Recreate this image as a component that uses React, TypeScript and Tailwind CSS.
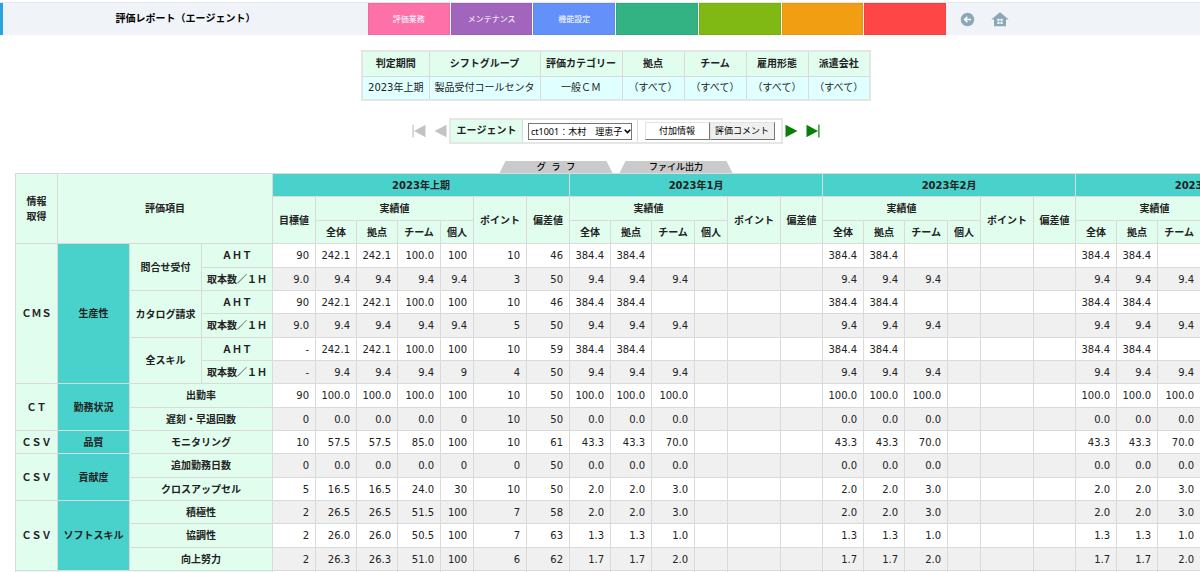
import React, { useState } from "react";

type Row = {
  group?: { code: string; name: string; span: number };
  skill?: { name: string; span: number };
  item: string;
  half: string[];
  month: string[];
};

const menus = [
  { label: "評価業務", color: "bg-[#fd70a8]" },
  { label: "メンテナンス", color: "bg-[#a265bd]" },
  { label: "機能設定", color: "bg-[#6490fa]" },
  { label: "", color: "bg-[#33b383]" },
  { label: "", color: "bg-[#80b814]" },
  { label: "", color: "bg-[#f19e12]" },
  { label: "", color: "bg-[#ff4646]" },
];

const conditions = [
  { label: "判定期間", value: "2023年上期", width: "w-[67px]" },
  { label: "シフトグループ", value: "製品受付コールセンタ", width: "w-[111px]" },
  { label: "評価カテゴリー", value: "一般ＣＭ", width: "w-[82px]" },
  { label: "拠点", value: "（すべて）", width: "w-[62px]" },
  { label: "チーム", value: "（すべて）", width: "w-[62px]" },
  { label: "雇用形態", value: "（すべて）", width: "w-[62px]" },
  { label: "派遣会社", value: "（すべて）", width: "w-[62px]" },
];

const months = ["2023年1月", "2023年2月", "2023年3月"];

const AHT_MONTH = ["384.4", "384.4", "", "", "", ""];
const CALL_MONTH = ["9.4", "9.4", "9.4", "", "", ""];

// half: 目標値, 全体, 拠点, チーム, 個人, ポイント, 偏差値
const rows: Row[] = [
  {
    group: { code: "ＣＭＳ", name: "生産性", span: 6 },
    skill: { name: "問合せ受付", span: 2 },
    item: "ＡＨＴ",
    half: ["90", "242.1", "242.1", "100.0", "100", "10", "46"],
    month: AHT_MONTH,
  },
  { item: "取本数／１Ｈ", half: ["9.0", "9.4", "9.4", "9.4", "9.4", "3", "50"], month: CALL_MONTH },
  {
    skill: { name: "カタログ請求", span: 2 },
    item: "ＡＨＴ",
    half: ["90", "242.1", "242.1", "100.0", "100", "10", "46"],
    month: AHT_MONTH,
  },
  { item: "取本数／１Ｈ", half: ["9.0", "9.4", "9.4", "9.4", "9.4", "5", "50"], month: CALL_MONTH },
  {
    skill: { name: "全スキル", span: 2 },
    item: "ＡＨＴ",
    half: ["-", "242.1", "242.1", "100.0", "100", "10", "59"],
    month: AHT_MONTH,
  },
  { item: "取本数／１Ｈ", half: ["-", "9.4", "9.4", "9.4", "9", "4", "50"], month: CALL_MONTH },
  {
    group: { code: "ＣＴ", name: "勤務状況", span: 2 },
    item: "出勤率",
    half: ["90", "100.0", "100.0", "100.0", "100", "10", "50"],
    month: ["100.0", "100.0", "100.0", "", "", ""],
  },
  {
    item: "遅刻・早退回数",
    half: ["0", "0.0", "0.0", "0.0", "0", "10", "50"],
    month: ["0.0", "0.0", "0.0", "", "", ""],
  },
  {
    group: { code: "ＣＳＶ", name: "品質", span: 1 },
    item: "モニタリング",
    half: ["10", "57.5", "57.5", "85.0", "100", "10", "61"],
    month: ["43.3", "43.3", "70.0", "", "", ""],
  },
  {
    group: { code: "ＣＳＶ", name: "貢献度", span: 2 },
    item: "追加勤務日数",
    half: ["0", "0.0", "0.0", "0.0", "0", "0", "50"],
    month: ["0.0", "0.0", "0.0", "", "", ""],
  },
  {
    item: "クロスアップセル",
    half: ["5", "16.5", "16.5", "24.0", "30", "10", "50"],
    month: ["2.0", "2.0", "3.0", "", "", ""],
  },
  {
    group: { code: "ＣＳＶ", name: "ソフトスキル", span: 3 },
    item: "積極性",
    half: ["2", "26.5", "26.5", "51.5", "100", "7", "58"],
    month: ["2.0", "2.0", "3.0", "", "", ""],
  },
  {
    item: "協調性",
    half: ["2", "26.0", "26.0", "50.5", "100", "7", "63"],
    month: ["1.3", "1.3", "1.0", "", "", ""],
  },
  {
    item: "向上努力",
    half: ["2", "26.3", "26.3", "51.0", "100", "6", "62"],
    month: ["1.7", "1.7", "2.0", "", "", ""],
  },
];

const line = "border border-[#dadada]";
const head = `${line} bg-[#e1fdee] font-bold text-center`;
const teal = `${line} bg-[#49d1cc] font-bold text-center`;

const Header = () => (
  <header className="mt-[2px] flex h-[33px] shrink-0 items-stretch border-t border-[#e6eaee] bg-[#f0f4f8]">
    <div className="flex w-[368px] items-center justify-center border-l-3 border-[#2ba3e0]">
      <h1 className="font-bold text-black">評価レポート（エージェント）</h1>
    </div>
    <nav className="grid w-[578px] grid-cols-7 gap-px bg-white/70" aria-label="メニュー">
      {menus.map((menu, i) => (
        <button key={i} type="button" className={`${menu.color} border border-black/5 pt-0.5 text-[8px] text-white`}>
          {menu.label}
        </button>
      ))}
    </nav>
    <div className="ml-3.5 flex items-center gap-4">
      <a href="#back" aria-label="戻る">
        <svg width="15" height="15" viewBox="0 0 15 15">
          <circle cx="7.5" cy="7.5" r="6.8" fill="#8ba8b6" />
          <path d="M11 7.5H4.6M7.4 4.7L4.5 7.5l2.9 2.8" fill="none" stroke="#fff" strokeWidth="1.4" />
        </svg>
      </a>
      <a href="#home" aria-label="ホーム">
        <svg width="18" height="15" viewBox="0 0 18 15">
          <path d="M9 0.3L17.7 7.6H15V14.2H3V7.6H0.3z" fill="#8ba8b6" />
          <path
            d="M6.3 6.8h2.3v2.3H6.3zM9.4 6.8h2.3v2.3H9.4zM6.3 9.8h2.3v2.3H6.3zM9.4 9.8h2.3v2.3H9.4z"
            fill="#f0f4f8"
          />
        </svg>
      </a>
    </div>
  </header>
);

const Conditions = () => (
  <table className="mt-[15px] table-fixed border-collapse border-2 border-[#e2e6e4] text-center">
    <thead>
      <tr className="h-[25px]">
        {conditions.map((c) => (
          <th key={c.label} className={`${head} ${c.width} whitespace-nowrap`}>
            {c.label}
          </th>
        ))}
      </tr>
    </thead>
    <tbody>
      <tr className="h-6">
        {conditions.map((c) => (
          <td key={c.label} className={`${line} bg-[#e0ffff] whitespace-nowrap`}>
            {c.value}
          </td>
        ))}
      </tr>
    </tbody>
  </table>
);

const AgentBar = () => {
  const [agent, setAgent] = useState("ct1001");

  return (
    <div className="mt-[17px] flex items-center">
      <button type="button" aria-label="最初" className="mr-2 text-[#c3c3c3]">
        <svg width="14" height="14" viewBox="0 0 14 14" fill="currentColor">
          <path d="M0.5 0.5h1.2v13H0.5zM13.5 0.8v12.4L2 7z" />
        </svg>
      </button>
      <button type="button" aria-label="前へ" className="mr-[2px] text-[#c3c3c3]">
        <svg width="13" height="14" viewBox="0 0 13 14" fill="currentColor">
          <path d="M12.5 0.8v12.4L0.5 7z" />
        </svg>
      </button>
      <div className="flex h-[26px] items-stretch border-2 border-[#e6e6e6]">
        <label htmlFor="agent" className="flex w-[71px] items-center justify-center bg-[#e1fdee] font-bold">
          エージェント
        </label>
        <div className="flex w-[116px] items-center justify-center border-x border-[#dadada]">
          <div className="relative flex">
            <select
              id="agent"
              value={agent}
              onChange={(e) => setAgent(e.target.value)}
              className="h-[17px] w-[104px] appearance-none border border-[#767676] bg-white pl-[2px] font-['Noto_Sans','Noto_Sans_CJK_JP',sans-serif] text-[9px] leading-[15px] text-black"
            >
              <option value="ct1001">ct1001：木村　理恵子</option>
            </select>
            <svg
              className="pointer-events-none absolute top-[6px] right-px"
              width="7"
              height="5"
              viewBox="0 0 7 5"
              fill="none"
              stroke="#000"
              strokeWidth="1.5"
            >
              <path d="M0.7 0.8l2.8 2.8 2.8-2.8" />
            </svg>
          </div>
        </div>
        <div className="flex w-[143px] items-center justify-center">
          <button
            type="button"
            className="h-[18px] w-[65px] border border-[#e3e3e3] border-r-[#767676] border-b-[#767676] bg-white text-[9px] text-black"
          >
            付加情報
          </button>
          <button
            type="button"
            className="h-[18px] w-[65px] border border-[#e3e3e3] border-r-[#767676] border-b-[#767676] bg-[#efefef] text-[9px] text-black"
          >
            評価コメント
          </button>
        </div>
      </div>
      <button type="button" aria-label="次へ" className="ml-[2px] text-[#088008]">
        <svg width="13" height="14" viewBox="0 0 13 14" fill="currentColor">
          <path d="M0.5 0.8v12.4L12.5 7z" />
        </svg>
      </button>
      <button type="button" aria-label="最後" className="ml-2 text-[#088008]">
        <svg width="14" height="14" viewBox="0 0 14 14" fill="currentColor">
          <path d="M12.3 0.5h1.2v13h-1.2zM0.5 0.8v12.4L12 7z" />
        </svg>
      </button>
    </div>
  );
};

const Tabs = () => (
  <div className="mt-[17px] flex gap-[7px]">
    {["グ  ラ  フ", "ファイル出力"].map((label) => (
      <button
        key={label}
        type="button"
        className="h-3 w-[113px] bg-[#cacaca] text-[9px] leading-3 font-medium whitespace-pre text-black [clip-path:polygon(6px_0,107px_0,100%_100%,0_100%)]"
      >
        {label}
      </button>
    ))}
  </div>
);

const ReportTable = () => (
  <table className="ml-[15px] w-[1314px] table-fixed border-collapse leading-[15px]">
    <colgroup>
      <col className="w-[42px]" />
      <col className="w-[72px]" />
      <col className="w-[72px]" />
      <col className="w-[71px]" />
      <col className="w-[43px]" />
      {["half", ...months].map((m) => (
        <React.Fragment key={m}>
          <col className="w-[41px]" />
          <col className="w-[41px]" />
          <col className="w-[43px]" />
          <col className="w-[33px]" />
          <col className="w-[53px]" />
          <col className={m === "half" ? "w-[43px]" : "w-[42px]"} />
        </React.Fragment>
      ))}
    </colgroup>
    <thead>
      <tr className="h-[23px]">
        <th rowSpan={3} className={head}>
          情報
          <br />
          取得
        </th>
        <th rowSpan={3} colSpan={3} className={head}>
          評価項目
        </th>
        <th colSpan={7} className={teal}>
          2023年上期
        </th>
        {months.map((m) => (
          <th key={m} colSpan={6} className={teal}>
            {m}
          </th>
        ))}
      </tr>
      <tr className="h-6">
        <th rowSpan={2} className={head}>
          目標値
        </th>
        {["half", ...months].map((m) => (
          <React.Fragment key={m}>
            <th colSpan={4} className={head}>
              実績値
            </th>
            <th rowSpan={2} className={head}>
              ポイント
            </th>
            <th rowSpan={2} className={head}>
              偏差値
            </th>
          </React.Fragment>
        ))}
      </tr>
      <tr className="h-[23px]">
        {["half", ...months].map((m) => (
          <React.Fragment key={m}>
            <th className={head}>全体</th>
            <th className={head}>拠点</th>
            <th className={head}>チーム</th>
            <th className={head}>個人</th>
          </React.Fragment>
        ))}
      </tr>
    </thead>
    <tbody>
      {rows.map((row, i) => (
        <tr key={i} className="h-[23px] even:bg-[#f0f0f0] nth-[3n+1]:h-6">
          {row.group && (
            <>
              <th rowSpan={row.group.span} className={head}>
                {row.group.code}
              </th>
              <th rowSpan={row.group.span} className={teal}>
                {row.group.name}
              </th>
            </>
          )}
          {row.skill && (
            <th rowSpan={row.skill.span} className={head}>
              {row.skill.name}
            </th>
          )}
          <th colSpan={i < 6 ? 1 : 2} className={head}>
            {row.item}
          </th>
          {[...row.half, ...row.month, ...row.month, ...row.month].map((value, j) => (
            <td key={j} className={`${line} pr-1.5 text-right`}>
              {value}
            </td>
          ))}
        </tr>
      ))}
      <tr className="h-6">
        <th colSpan={4} className={head} />
        {Array.from({ length: 25 }, (_, j) => (
          <td key={j} className={line} />
        ))}
      </tr>
    </tbody>
  </table>
);

const App = () => (
  <div className="flex h-screen flex-col overflow-hidden bg-white font-['DejaVu_Sans','Noto_Sans_CJK_JP',sans-serif] text-[10px] leading-4 text-[#222]">
    <Header />
    <div className="flex flex-col items-center pl-8">
      <Conditions />
      <AgentBar />
      <Tabs />
    </div>
    <div>
      <ReportTable />
    </div>
  </div>
);

export default App;
